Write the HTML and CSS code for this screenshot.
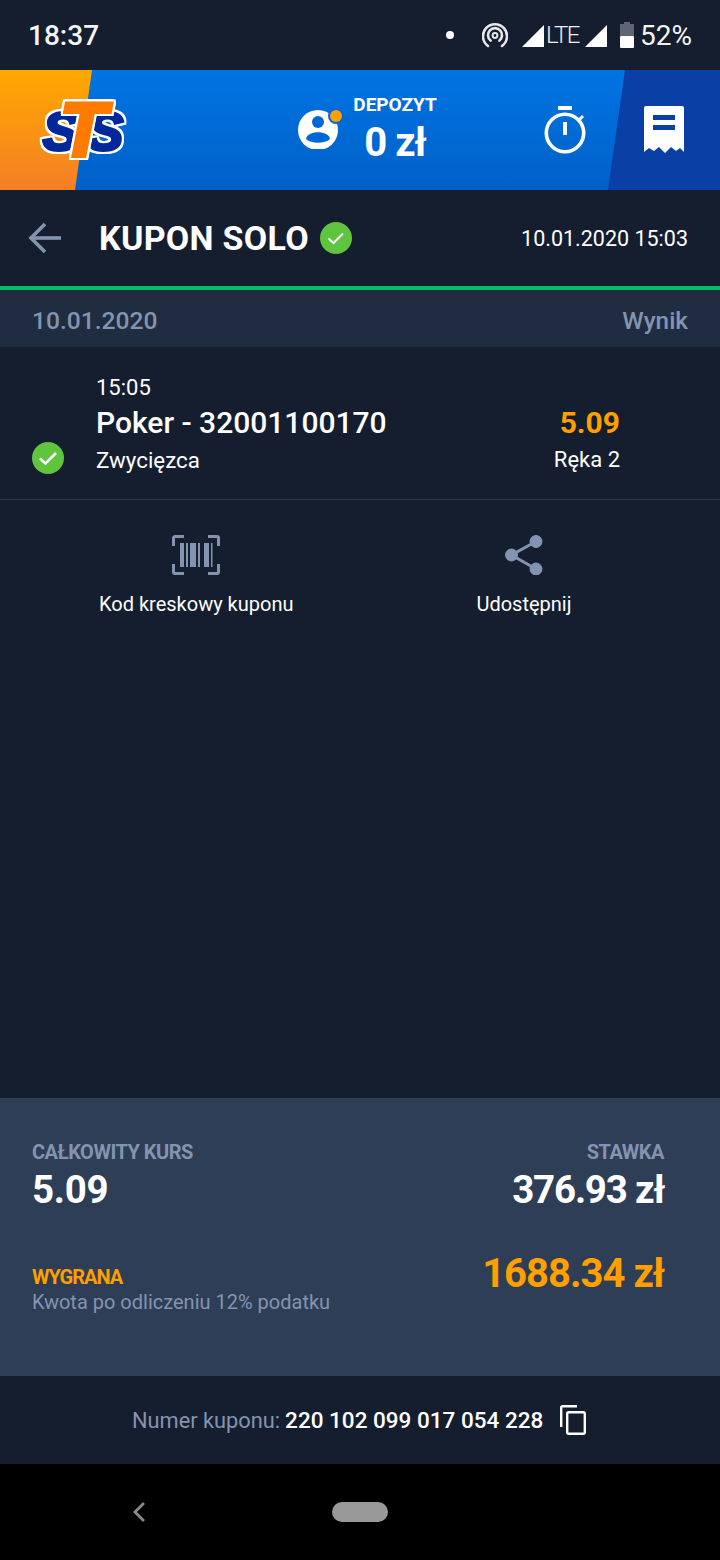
FILE: index.html
```html
<!DOCTYPE html>
<html lang="pl">
<head>
  <meta charset="UTF-8">
  <title>Kupon solo</title>
  <link rel="stylesheet" href="styles.css">
</head>
<body>
  <div class="status-bar">
    <span class="clock">18:37</span>
    <div class="status-icons">
      <span class="dot"></span>
      <svg class="hotspot" width="26" height="26" viewBox="0 0 26 26" fill="none" stroke="#e8e8e8" stroke-width="2.600" stroke-linecap="round">
        <path d="M6 24A12 12 0 1 1 20 24"/>
        <path d="M8.600 18.600A7 7 0 1 1 17.400 18.600"/>
        <circle cx="13" cy="13.500" r="2.400" stroke-width="2"/>
      </svg>
      <svg class="signal" width="22" height="22" viewBox="0 0 22 22"><path d="M22 0V22H0Z" fill="#fff"/></svg>
      <span class="lte">LTE</span>
      <svg class="signal second" width="22" height="22" viewBox="0 0 22 22"><path d="M22 0V22H0Z" fill="#fff"/></svg>
      <svg class="battery" width="14" height="26" viewBox="0 0 14 26">
        <path d="M4 0H10V2H14V14H0V2H4Z" fill="#5f6673"/>
        <rect y="14" width="14" height="12" rx="1" fill="#fff"/>
      </svg>
      <span class="percent">52%</span>
    </div>
  </div>

  <header class="top-bar">
    <div class="logo">
      <span class="logo-s">S</span><span class="logo-t">T</span><span class="logo-s">S</span>
    </div>
    <svg class="account" width="52" height="46" viewBox="0 0 52 46">
      <circle cx="21" cy="27" r="20" fill="#fff"/>
      <circle cx="21" cy="19" r="6" fill="#0068d6"/>
      <path d="M9 36C10 27 32 27 33 36C28 41 14 41 9 36Z" fill="#0068d6"/>
      <circle cx="39" cy="13" r="8" fill="#0069d8"/>
      <circle cx="39" cy="13" r="6" fill="#ff9f00"/>
    </svg>
    <div class="deposit">
      <span class="deposit-label">DEPOZYT</span>
      <span class="deposit-value">0 zł</span>
    </div>
    <svg class="timer" width="44" height="50" viewBox="0 0 44 50" fill="none" stroke="#fff">
      <path d="M14 2H28" stroke-width="4"/>
      <circle cx="21" cy="27" r="18.700" stroke-width="3.600"/>
      <path d="M21 16V29" stroke-width="4"/>
      <path d="M35 14L39 10" stroke-width="3"/>
    </svg>
    <svg class="receipt" width="40" height="48" viewBox="0 0 40 48">
      <path d="M2 0H38A2 2 0 0 1 40 2V46L36 42L32 45L27 41L21 47L15 41L10 45L5 42L0 46V2A2 2 0 0 1 2 0Z" fill="#fff"/>
      <path d="M9 9H31V14H9Z" fill="#0a3fa6"/>
      <path d="M9 19H31V24H9Z" fill="#0a3fa6"/>
    </svg>
  </header>

  <div class="title-bar">
    <svg class="back" width="34" height="32" viewBox="0 0 34 32" fill="none" stroke="#8493b0" stroke-width="3.600">
      <path d="M33 16H3"/>
      <path d="M17 2L3 16L17 30"/>
    </svg>
    <h1>KUPON SOLO</h1>
    <svg class="check" width="32" height="32" viewBox="0 0 32 32">
      <circle cx="16" cy="16" r="16" fill="#5fc43e"/>
      <path d="M8.500 16.500L13.500 21L23 11.500" fill="none" stroke="#fff" stroke-width="2"/>
    </svg>
    <span class="title-date">10.01.2020 15:03</span>
  </div>

  <div class="date-row">
    <span>10.01.2020</span>
    <span class="result">Wynik</span>
  </div>

  <div class="event">
    <svg class="check" width="32" height="32" viewBox="0 0 32 32">
      <circle cx="16" cy="16" r="16" fill="#5fc43e"/>
      <path d="M8 16.500L13.500 21.500L24 11" fill="none" stroke="#fff" stroke-width="2.600"/>
    </svg>
    <div class="event-main">
      <span class="event-time">15:05</span>
      <span class="event-name">Poker - 32001100170</span>
      <span class="event-type">Zwycięzca</span>
    </div>
    <div class="event-odds">
      <span class="odds">5.09</span>
      <span class="event-type">Ręka 2</span>
    </div>
  </div>

  <div class="actions">
    <div class="action">
      <svg width="48" height="40" viewBox="0 0 48 40" fill="none" stroke="#8493b0" stroke-width="3">
        <path d="M12 1.500H3A1.500 1.500 0 0 0 1.500 3V11"/>
        <path d="M36 1.500H45A1.500 1.500 0 0 1 46.500 3V11"/>
        <path d="M12 38.500H3A1.500 1.500 0 0 1 1.500 37V29"/>
        <path d="M36 38.500H45A1.500 1.500 0 0 0 46.500 37V29"/>
        <g fill="#8493b0" stroke="none">
          <rect x="8" y="8" width="4" height="24"/>
          <rect x="14" y="8" width="2" height="24"/>
          <rect x="18" y="8" width="6" height="24"/>
          <rect x="26" y="8" width="2" height="24"/>
          <rect x="32" y="8" width="5" height="24"/>
          <rect x="39" y="8" width="1.500" height="24"/>
        </g>
      </svg>
      <span>Kod kreskowy kuponu</span>
    </div>
    <div class="action">
      <svg width="38" height="40" viewBox="0 0 38 40" fill="#8493b0" stroke="#8493b0">
        <circle cx="31" cy="6.500" r="6"/>
        <circle cx="6.500" cy="20" r="6"/>
        <circle cx="31" cy="34" r="6"/>
        <path d="M31 6.500L6.500 20L31 34" fill="none" stroke-width="3"/>
      </svg>
      <span>Udostępnij</span>
    </div>
  </div>

  <div class="spacer"></div>

  <section class="summary">
    <div class="summary-row">
      <div class="summary-col">
        <span class="label">CAŁKOWITY KURS</span>
        <span class="amount short">5.09</span>
      </div>
      <div class="summary-col right">
        <span class="label">STAWKA</span>
        <span class="amount">376.93 zł</span>
      </div>
    </div>
    <div class="summary-row win">
      <div class="summary-col win-text">
        <span class="label orange">WYGRANA</span>
        <span class="tax">Kwota po odliczeniu 12% podatku</span>
      </div>
      <span class="amount big orange">1688.34 zł</span>
    </div>
  </section>

  <div class="coupon-number">
    <span class="coupon-label">Numer kuponu:</span>
    <span class="coupon-value">220 102 099 017 054 228</span>
    <svg width="26" height="30" viewBox="0 0 26 30" fill="none" stroke="#fff" stroke-width="2.400">
      <path d="M17 1.200H2.500A1.300 1.300 0 0 0 1.200 2.500V22"/>
      <rect x="7.200" y="7.200" width="17.600" height="21.600" rx="1.500"/>
    </svg>
  </div>

  <nav class="nav-bar">
    <svg class="nav-back" width="14" height="22" viewBox="0 0 14 22" fill="none" stroke="#8a8a8a" stroke-width="2.800">
      <path d="M12 2L3 11L12 20"/>
    </svg>
    <span class="nav-home"></span>
  </nav>
</body>
</html>
```

FILE: styles.css
```css
* {
  box-sizing: border-box;
}

body {
  margin: 0;
  width: 720px;
  height: 1560px;
  display: flex;
  flex-direction: column;
  background: #141e2f;
  color: #fff;
  font-family: Roboto, sans-serif;
}

/* status bar */
.status-bar {
  height: 70px;
  display: flex;
  align-items: center;
  justify-content: space-between;
  padding: 0 28px;
}

.clock {
  font-size: 28px;
  font-weight: 500;
  color: #f4f4f4;
}

.status-icons {
  display: flex;
  align-items: center;
}

.dot {
  width: 8px;
  height: 8px;
  border-radius: 50%;
  background: #fff;
  margin-right: 28px;
}

.hotspot {
  margin-right: 14px;
}

.signal {
  margin-top: 2px;
}

.signal.second {
  margin-right: 13px;
}

.lte {
  font-size: 24px;
  font-weight: 300;
  width: 41px;
  padding-left: 2px;
  letter-spacing: -1.500px;
  color: #f0f0f0;
}

.battery {
  margin-right: 6px;
}

.percent {
  font-size: 28px;
  color: #f4f4f4;
}

/* blue bar */
.top-bar {
  position: relative;
  height: 120px;
  display: flex;
  align-items: center;
  background: linear-gradient(#0074e2, #0060c8);
  overflow: hidden;
}

.top-bar::before {
  content: "";
  position: absolute;
  left: 0;
  top: 0;
  width: 92px;
  height: 120px;
  background: linear-gradient(#ffa800, #f47f26);
  clip-path: polygon(0 0, 100% 0, 75px 100%, 0 100%);
}

.top-bar::after {
  content: "";
  position: absolute;
  right: 0;
  top: 0;
  width: 112px;
  height: 120px;
  background: #0a3fa6;
  clip-path: polygon(17px 0, 100% 0, 100% 100%, 0 100%);
}

.logo {
  position: relative;
  z-index: 1;
  width: 96px;
  margin-left: 35px;
  display: flex;
  justify-content: center;
  align-items: center;
  font-family: "Liberation Sans", sans-serif;
  font-weight: 700;
  font-style: italic;
}

.logo-s {
  font-size: 54px;
  line-height: 60px;
  margin-top: 2px;
  color: #00289a;
  -webkit-text-stroke: 3px #00289a;
  filter: drop-shadow(2px 0 #fff) drop-shadow(-2px 0 #fff) drop-shadow(0 2px #fff) drop-shadow(0 -2px #fff);
}

.logo-t {
  font-size: 76px;
  line-height: 60px;
  color: #ff7b00;
  margin: 0 -19px;
  position: relative;
  z-index: 1;
  -webkit-text-stroke: 4px #ff7b00;
  filter: drop-shadow(2px 0 #fff) drop-shadow(-2px 0 #fff) drop-shadow(0 2px #fff) drop-shadow(0 -2px #fff);
}

.account {
  margin-left: 166px;
  margin-top: -8px;
}

.deposit {
  width: 84px;
  margin-left: 4px;
  display: flex;
  flex-direction: column;
  align-items: center;
  font-weight: 700;
}

.deposit-label {
  font-size: 19px;
  line-height: 20px;
  margin-top: 2px;
}

.deposit-value {
  font-size: 40px;
  line-height: 50px;
  margin-top: 3px;
  letter-spacing: -1px;
}

.timer {
  margin-left: 107px;
  margin-top: 2px;
}

.receipt {
  position: relative;
  z-index: 1;
  margin-left: 56px;
  margin-top: -1px;
}

/* title */
.title-bar {
  height: 96px;
  display: flex;
  align-items: center;
  padding: 0 32px 0 28px;
}

.title-bar h1 {
  margin: 0 11px 0 37px;
  font-size: 34px;
  font-weight: 700;
  letter-spacing: 0.3px;
}

.title-date {
  margin-left: auto;
  font-size: 21.500px;
}

/* date row */
.date-row {
  height: 61px;
  padding: 3px 32px 0;
  border-top: 4px solid #00c164;
  display: flex;
  align-items: center;
  justify-content: space-between;
  background: #202d40;
  color: #8493b0;
  font-size: 24.600px;
  font-weight: 500;
}

.result {
  font-size: 24.300px;
}

/* event */
.event {
  height: 153px;
  padding: 0 100px 25px 32px;
  border-bottom: 1px solid #2a3648;
  display: flex;
  align-items: flex-end;
}

.event-main {
  margin-left: 32px;
  margin-bottom: -3px;
  display: flex;
  flex-direction: column;
}

.event-time {
  font-size: 22px;
  line-height: 30px;
}

.event-name {
  font-size: 30px;
  line-height: 40px;
  font-weight: 500;
}

.event-type {
  font-size: 22.300px;
  line-height: 34px;
}

.event-odds {
  margin-left: auto;
  margin-bottom: -3px;
  display: flex;
  flex-direction: column;
  align-items: flex-end;
}

.event-odds .event-type {
  font-size: 22px;
}

.odds {
  color: #ff9f00;
  font-size: 30px;
  line-height: 40px;
  font-weight: 700;
}

/* actions */
.actions {
  display: flex;
  gap: 183px;
  padding: 35px 0 0 99px;
}

.action {
  display: flex;
  flex-direction: column;
  align-items: center;
  gap: 17px;
  font-size: 20px;
  line-height: 24px;
}

.spacer {
  flex: 1;
}

/* summary */
.summary {
  height: 278px;
  padding: 40px 56px 0 32px;
  background: #2e3e57;
}

.summary-row {
  display: flex;
  justify-content: space-between;
}

.summary-row.win {
  margin-top: 36px;
}

.summary-col {
  display: flex;
  flex-direction: column;
}

.summary-col.right {
  align-items: flex-end;
}

.win-text {
  margin-top: 13px;
}

.label {
  color: #8493b0;
  font-size: 20px;
  line-height: 28px;
  font-weight: 700;
  letter-spacing: -0.5px;
}

.label.orange {
  color: #ff9f00;
  letter-spacing: -1px;
}

.amount {
  font-size: 38.500px;
  line-height: 48px;
  font-weight: 700;
  letter-spacing: -1.200px;
}

.amount.short {
  letter-spacing: -0.300px;
}

.amount.big {
  font-size: 40px;
  letter-spacing: -1px;
}

.orange {
  color: #ff9f00;
}

.tax {
  color: #8493b0;
  font-size: 20px;
  line-height: 22px;
}

/* coupon number */
.coupon-number {
  height: 88px;
  padding-left: 132px;
  display: flex;
  align-items: center;
  font-size: 21.800px;
}

.coupon-label {
  color: #8493b0;
}

.coupon-value {
  margin-left: 5px;
  margin-right: 17px;
  font-size: 22.500px;
  font-weight: 500;
}

/* android nav */
.nav-bar {
  position: relative;
  height: 96px;
  background: #000;
  display: flex;
  align-items: center;
  justify-content: center;
}

.nav-back {
  position: absolute;
  left: 132px;
  top: 37px;
}

.nav-home {
  width: 56px;
  height: 20px;
  border-radius: 10px;
  background: #999;
  margin-top: -1px;
}
```
